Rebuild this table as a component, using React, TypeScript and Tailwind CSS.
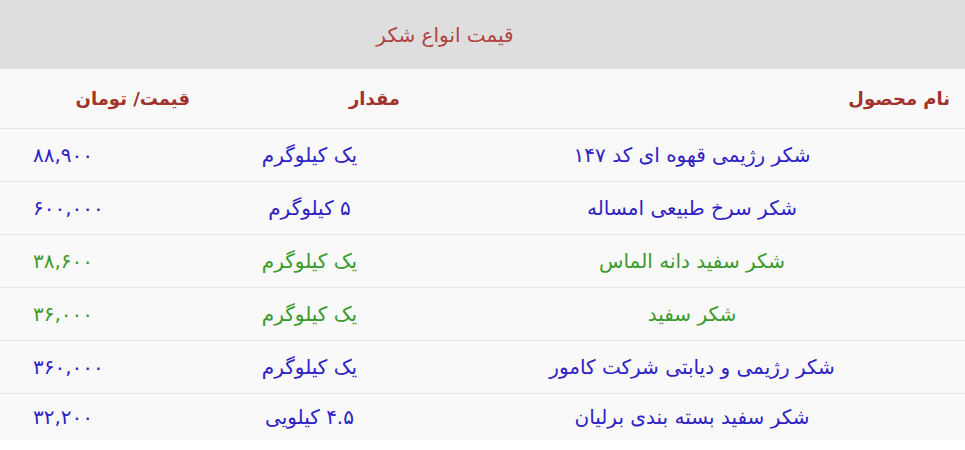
import React from 'react';

const rows = [
  { name: 'شکر رژیمی قهوه ای کد ۱۴۷', qty: 'یک کیلوگرم', price: '۸۸,۹۰۰', color: 'text-[#2f22c4]' },
  { name: 'شکر سرخ طبیعی امساله', qty: '۵ کیلوگرم', price: '۶۰۰,۰۰۰', color: 'text-[#2f22c4]' },
  { name: 'شکر سفید دانه الماس', qty: 'یک کیلوگرم', price: '۳۸,۶۰۰', color: 'text-[#3c9a2c]' },
  { name: 'شکر سفید', qty: 'یک کیلوگرم', price: '۳۶,۰۰۰', color: 'text-[#3c9a2c]' },
  { name: 'شکر رژیمی و دیابتی شرکت کامور', qty: 'یک کیلوگرم', price: '۳۶۰,۰۰۰', color: 'text-[#2f22c4]' },
  { name: 'شکر سفید بسته بندی برلیان', qty: '۴.۵ کیلویی', price: '۳۲,۲۰۰', color: 'text-[#2f22c4]' },
];

const App = () => {
  return (
    <div dir="rtl" className="w-[965px] h-[450px] bg-white font-['DejaVu_Sans',sans-serif]">
      <div className="h-[69px] bg-[#dedede] flex items-center justify-center pr-[75px] text-[20px] text-[#b0443f]">
        قیمت انواع شکر
      </div>

      <div className="grid grid-cols-[546px_219px_200px] h-[60px] bg-[#f9f9f9] border-b border-[#e6e6e6] items-center text-[18px] font-bold text-[#a1322c]">
        <div className="pr-[15px] text-right">نام محصول</div>
        <div className="pr-[19px] text-right">مقدار</div>
        <div className="pr-[10px] text-right">قیمت/ تومان</div>
      </div>

      {rows.map((r, i) => (
        <div
          key={i}
          className={`grid grid-cols-[546px_219px_200px] items-center text-[20px] bg-[#f9f9f9] ${r.color} ${
            i < rows.length - 1 ? 'h-[53px] border-b border-[#e8e8e8]' : 'h-[46px]'
          }`}
        >
          <div className="text-center">{r.name}</div>
          <div className="text-center">{r.qty}</div>
          <div className="text-left pl-[33px]">{r.price}</div>
        </div>
      ))}
    </div>
  );
};

export default App;
